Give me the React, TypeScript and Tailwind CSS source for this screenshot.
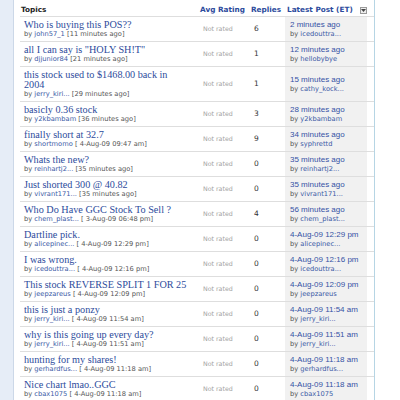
type Topic = {
  title: string
  author: string
  posted: string
  replies: number
  latest: string
  latestBy: string
}

const topics: Topic[] = [
  { title: "Who is buying this POS??", author: "john57_1", posted: "[11 minutes ago]", replies: 6, latest: "2 minutes ago", latestBy: "icedouttra..." },
  { title: 'all I can say is "HOLY SH!T"', author: "djjunior84", posted: "[21 minutes ago]", replies: 1, latest: "12 minutes ago", latestBy: "hellobybye" },
  { title: "this stock used to $1468.00 back in 2004", author: "jerry_kiri...", posted: "[29 minutes ago]", replies: 1, latest: "15 minutes ago", latestBy: "cathy_kock..." },
  { title: "basicly 0.36 stock", author: "y2kbambam", posted: "[36 minutes ago]", replies: 3, latest: "28 minutes ago", latestBy: "y2kbambam" },
  { title: "finally short at 32.7", author: "shortmomo", posted: "[ 4-Aug-09 09:47 am]", replies: 9, latest: "34 minutes ago", latestBy: "syphrettd" },
  { title: "Whats the new?", author: "reinhartj2...", posted: "[35 minutes ago]", replies: 0, latest: "35 minutes ago", latestBy: "reinhartj2..." },
  { title: "Just shorted 300 @ 40.82", author: "vivrant171...", posted: "[35 minutes ago]", replies: 0, latest: "35 minutes ago", latestBy: "vivrant171..." },
  { title: "Who Do Have GGC Stock To Sell ?", author: "chem_plast...", posted: "[ 3-Aug-09 06:48 pm]", replies: 4, latest: "56 minutes ago", latestBy: "chem_plast..." },
  { title: "Dartline pick.", author: "alicepinec...", posted: "[ 4-Aug-09 12:29 pm]", replies: 0, latest: "4-Aug-09 12:29 pm", latestBy: "alicepinec..." },
  { title: "I was wrong.", author: "icedouttra...", posted: "[ 4-Aug-09 12:16 pm]", replies: 0, latest: "4-Aug-09 12:16 pm", latestBy: "icedouttra..." },
  { title: "This stock REVERSE SPLIT 1 FOR 25", author: "jeepzareus", posted: "[ 4-Aug-09 12:09 pm]", replies: 0, latest: "4-Aug-09 12:09 pm", latestBy: "jeepzareus" },
  { title: "this is just a ponzy", author: "jerry_kiri...", posted: "[ 4-Aug-09 11:54 am]", replies: 0, latest: "4-Aug-09 11:54 am", latestBy: "jerry_kiri..." },
  { title: "why is this going up every day?", author: "jerry_kiri...", posted: "[ 4-Aug-09 11:51 am]", replies: 0, latest: "4-Aug-09 11:51 am", latestBy: "jerry_kiri..." },
  { title: "hunting for my shares!", author: "gerhardfus...", posted: "[ 4-Aug-09 11:18 am]", replies: 0, latest: "4-Aug-09 11:18 am", latestBy: "gerhardfus..." },
  { title: "Nice chart lmao..GGC", author: "cbax1075", posted: "[ 4-Aug-09 11:18 am]", replies: 0, latest: "4-Aug-09 11:18 am", latestBy: "cbax1075" },
]

function SortIcon() {
  return (
    <span className="flex h-[7px] w-[7px] items-center justify-center border border-[#9a9a9a] bg-[#eeeeee]">
      <svg width="5" height="3" viewBox="0 0 5 3">
        <path d="M0 0h5L2.5 3z" fill="#444" />
      </svg>
    </span>
  )
}

export default function App() {
  return (
    <div className="flex h-[400px] w-[400px] overflow-hidden bg-white font-['DejaVu_Sans',sans-serif]">
      {/* side rail */}
      <div className="w-[14px] shrink-0 border-r border-[#ccd8e8] bg-[#e6edf7]" />

      <div className="w-[361px] shrink-0 border-r border-[#b6d5e4] pl-[6px]">
        {/* column headings */}
        <div className="grid grid-cols-[180px_51px_34px_82px] border-b border-[#dedede] pt-[5px] pb-[1px] text-[7.3px] font-bold leading-[10px]">
          <div className="pl-[1px] text-[#222]">Topics</div>
          <div className="text-[#2c4b9c]">Avg Rating</div>
          <div className="text-[#2c4b9c]">Replies</div>
          <div className="flex items-center justify-between pl-[2px] text-[#2c4b9c]">
            <span className="whitespace-nowrap">Latest Post (ET)</span>
            <SortIcon />
          </div>
        </div>

        {topics.map((t) => (
          <div
            key={t.title}
            className="grid grid-cols-[180px_51px_34px_82px] border-b border-[#dedede]"
          >
            <div className="pl-[4px] pr-[12px] pt-[3px] pb-[2px]">
              <div className="font-['Liberation_Serif',serif] text-[10.2px] leading-[10px] text-[#2c4b9c]">
                {t.title}
              </div>
              <div className="whitespace-nowrap text-[6.7px] leading-[9px] text-[#555]">
                by <span className="text-[#3b5aa6]">{t.author}</span> {t.posted}
              </div>
            </div>
            <div className="flex items-center pl-[3px] text-[6.3px] text-[#a3a3a3]">
              Not rated
            </div>
            <div className="flex items-center pl-[3px] text-[7.5px] text-[#333]">
              {t.replies}
            </div>
            <div className="flex flex-col justify-center bg-[#f1f1f1] pl-[5px]">
              <div className="whitespace-nowrap font-['Liberation_Sans',sans-serif] text-[8px] leading-[10px] text-[#3552a5]">
                {t.latest}
              </div>
              <div className="whitespace-nowrap text-[6.7px] leading-[9px] text-[#555]">
                by <span className="text-[#3b5aa6]">{t.latestBy}</span>
              </div>
            </div>
          </div>
        ))}
      </div>
    </div>
  )
}
